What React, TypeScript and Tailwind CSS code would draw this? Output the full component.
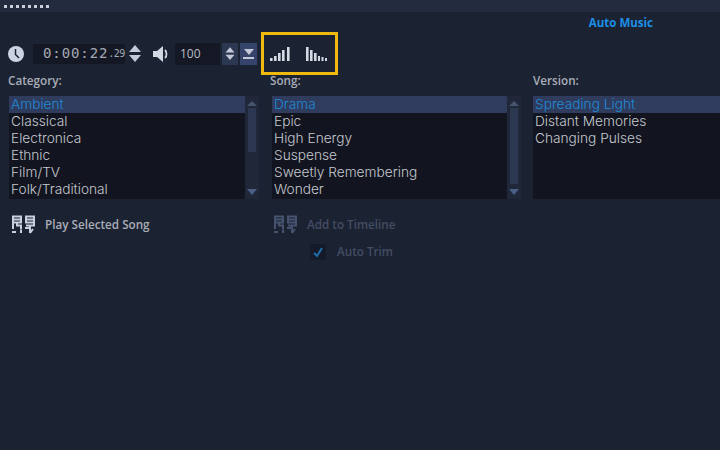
import React from 'react';

const font = { fontFamily: '"Open Sans", "Liberation Sans", sans-serif' };
const listFont = { fontFamily: 'Inter, "Liberation Sans", sans-serif' };

const Arrows = ({ className = 'w-[14px]' }: { className?: string }) => (
  <div className={`flex flex-col items-center justify-center gap-[3px] ${className}`}>
    <div className="w-0 h-0 border-x-[6px] border-x-transparent border-b-[7px] border-b-[#c3c9d6]" />
    <div className="w-0 h-0 border-x-[6px] border-x-transparent border-t-[7px] border-t-[#c3c9d6]" />
  </div>
);

const NoteIcon = ({ color }: { color: string }) => (
  <svg width="25" height="20" viewBox="0 0 25 20" fill="none" stroke={color} strokeWidth="2">
    <path d="M1 1.5h10M1 4.5h10M1 7.5h10M2 1v13M10 1v7M6 7.5v3h4v4M14 1.5h10M14 4.5h10M14 7.5h10M15 1v7M23 1v10M15 10.5h9M19 10v8M14 13h5M22 14l-3 4" />
    <path d="M1 17h4M10 15v3" />
  </svg>
);

const ListBox = ({ items, scroll, thumb, className }: { items: string[]; scroll: boolean; thumb: string; className: string }) => (
  <div className={`flex h-[103px] ${className}`}>
    <div className="flex-1 min-w-0 bg-[#12151f]" style={listFont}>
      {items.map((item, i) => (
        <div
          key={item}
          className={`h-[17px] pl-[2px] text-[13.7px] font-light leading-[17px] whitespace-nowrap ${i === 0 ? 'bg-[#2f3c5e] text-[#1f8ad8]' : 'text-[#c5c8cf]'}`}
        >
          {item}
        </div>
      ))}
    </div>
    {scroll && (
      <div className="w-[14px] flex flex-col items-center bg-[#1f2739]">
        <div className="w-0 h-0 mt-[5px] border-x-[5px] border-x-transparent border-b-[5px] border-b-[#47556f]" />
        <div className={`w-[8px] mt-[2px] bg-[#2c3751] ${thumb}`} />
        <div className="flex-1" />
        <div className="w-0 h-0 mb-[4px] border-x-[5px] border-x-transparent border-t-[6px] border-t-[#4b5f85]" />
      </div>
    )}
  </div>
);

export default function App() {
  return (
    <div className="w-[720px] h-[450px] overflow-hidden bg-[#1b2232] flex flex-col" style={font}>
      {/* title strip */}
      <div className="h-[12px] bg-[#232b3e] flex items-center gap-[3px] pl-[4px]">
        {Array.from({ length: 8 }).map((_, i) => (
          <div key={i} className="w-[3px] h-[3px] bg-[#c9ced9]" />
        ))}
      </div>

      <div className="h-[20px] pt-[2px] flex justify-end items-center pr-[67px]">
        <span className="text-[11.5px] font-bold text-[#1b8fe6] leading-none">Auto Music</span>
      </div>

      {/* toolbar */}
      <div className="h-[43px] flex items-center pl-[8px]">
        <svg width="16" height="16" viewBox="0 0 16 16">
          <circle cx="8" cy="8" r="8" fill="#ccd3e1" />
          <path d="M7.5 3v5.5l3.5 3.5" fill="none" stroke="#1b2232" strokeWidth="1.5" />
        </svg>
        <div className="ml-[9px] w-[92px] h-[20px] bg-[#141824] flex items-center pl-[10px] text-[#a4a9b4] whitespace-nowrap" style={{ fontFamily: '"DejaVu Sans Mono", monospace' }}>
          <span className="text-[14px] tracking-[0.9px]">0:00:22</span><span className="text-[10px] tracking-[-0.5px]">.29</span>
        </div>
        <Arrows className="w-[14px] ml-[3px]" />
        <svg className="ml-[10px]" width="18" height="18" viewBox="0 0 18 18">
          <path d="M1 6h4l6-5v16l-6-5H1z" fill="#d4d8e2" />
          <path d="M13 5c2 2 2 6 0 8" fill="none" stroke="#d4d8e2" strokeWidth="1.8" />
        </svg>
        <div className="ml-[5px] w-[45px] h-[22px] bg-[#141824] flex items-center pl-[5px] text-[#b9bdc6] text-[12px]">100</div>
        <div className="ml-[2px] w-[16px] h-[22px] bg-[#2c3751] flex items-center justify-center">
          <Arrows className="w-[12px] scale-75" />
        </div>
        <div className="ml-[2px] w-[17px] h-[22px] bg-[#36436a] flex flex-col items-center justify-center gap-[2px]">
          <div className="w-0 h-0 border-x-[5px] border-x-transparent border-t-[6px] border-t-[#c3c9d6]" />
          <div className="w-[11px] h-[2px] bg-[#c3c9d6]" />
        </div>
        {/* highlighted waveform buttons */}
        <div className="ml-[4px] w-[77px] h-[43px] border-[3px] border-[#f0b90f] flex items-center pl-[5px] gap-[14px]">
          <svg width="22" height="18" viewBox="0 0 22 18" fill="#d5d9e2">
            <rect x="1" y="13" width="2.6" height="3" />
            <rect x="5" y="11" width="2.6" height="5" />
            <rect x="9" y="8" width="2.6" height="8" />
            <rect x="13" y="5" width="2.6" height="11" />
            <rect x="18" y="2" width="2.6" height="14" />
          </svg>
          <svg width="22" height="18" viewBox="0 0 22 18" fill="#d5d9e2">
            <rect x="1" y="2" width="2.6" height="14" />
            <rect x="5" y="5" width="2.6" height="11" />
            <rect x="9" y="8" width="2.6" height="8" />
            <rect x="13" y="11" width="2" height="5" />
            <rect x="16.5" y="12" width="2" height="4" />
            <rect x="20" y="13" width="2" height="3" />
          </svg>
        </div>
      </div>

      {/* labels */}
      <div className="flex h-[16px] -mt-[3px] text-[11.7px] font-semibold text-[#a9adb7] leading-[16px]">
        <span className="ml-[8px] w-[262px]">Category:</span>
        <span className="w-[263px]">Song:</span>
        <span>Version:</span>
      </div>

      {/* lists */}
      <div className="flex mt-[8px]">
        <ListBox
          className="ml-[9px] w-[250px]"
          items={['Ambient', 'Classical', 'Electronica', 'Ethnic', 'Film/TV', 'Folk/Traditional']}
          scroll
          thumb="h-[44px]"
        />
        <ListBox
          className="ml-[13px] w-[249px]"
          items={['Drama', 'Epic', 'High Energy', 'Suspense', 'Sweetly Remembering', 'Wonder']}
          scroll
          thumb="h-[76px]"
        />
        <ListBox
          className="ml-[12px] flex-1"
          items={['Spreading Light', 'Distant Memories', 'Changing Pulses']}
          scroll={false}
          thumb=""
        />
      </div>

      {/* actions */}
      <div className="flex mt-[15px]">
        <div className="ml-[11px] w-[262px] flex items-center gap-[9px] h-[22px]">
          <NoteIcon color="#c8d0e0" />
          <span className="text-[11.7px] font-semibold text-[#a9adb7]">Play Selected Song</span>
        </div>
        <div>
          <div className="flex items-center gap-[9px] h-[22px]">
            <NoteIcon color="#46536f" />
            <span className="text-[11.7px] font-semibold text-[#434d62]">Add to Timeline</span>
          </div>
          <div className="flex items-center mt-[7px] ml-[37px] gap-[11px] h-[18px]">
            <div className="w-[16px] h-[16px] bg-[#141a29] flex items-center justify-center">
              <svg width="12" height="12" viewBox="0 0 12 12" fill="none" stroke="#1e6fa8" strokeWidth="2">
                <path d="M2 7l3 3 5-8" />
              </svg>
            </div>
            <span className="text-[11.7px] font-semibold text-[#434d62]">Auto Trim</span>
          </div>
        </div>
      </div>
    </div>
  );
}
